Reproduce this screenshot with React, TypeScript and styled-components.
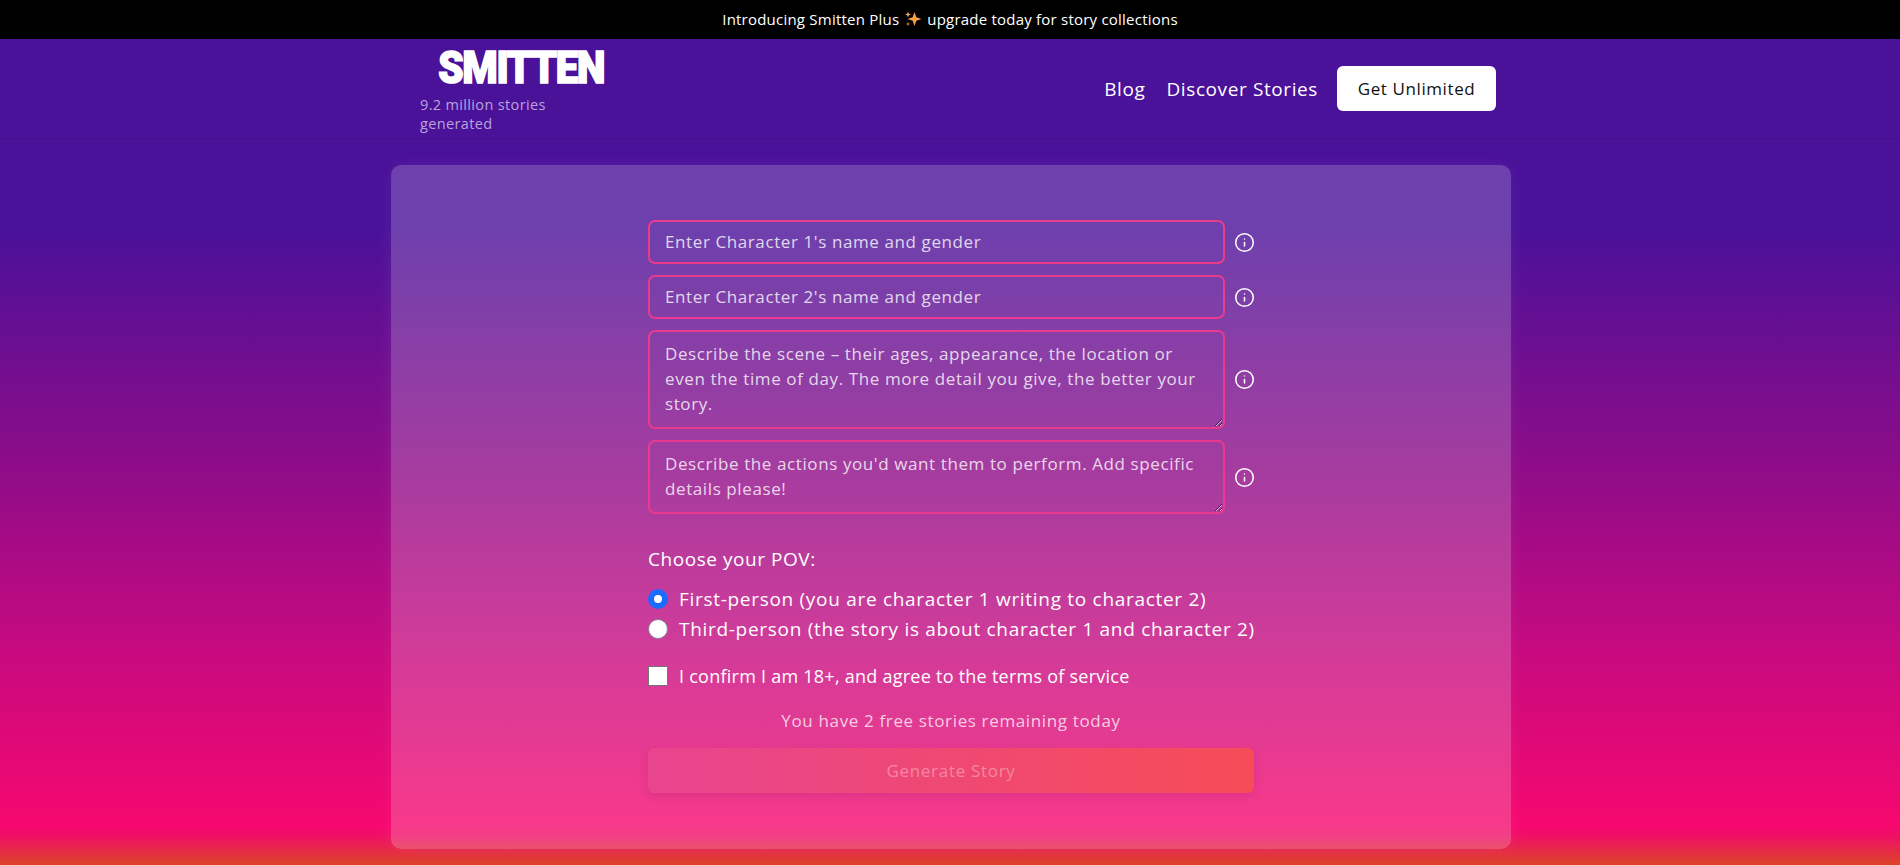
import React from 'react';
import styled, { createGlobalStyle } from 'styled-components';
import { Info } from 'lucide-react';

const FONT = `"Open Sans", "Noto Sans", sans-serif`;

const Global = createGlobalStyle`
    html, body {
        margin: 0;
        padding: 0;
        height: 865px;
        overflow: hidden;
        background: #4a1199;
    }
    * {
        box-sizing: border-box;
    }
`;

const Page = styled.div`
    height: 865px;
    overflow: hidden;
    font-family: ${FONT};
    color: #fff;
    background: linear-gradient(180deg, #4a1199 0, #4a1199 230px, #8f0c88 470px, #c40a80 640px, #f6086f 825px, #f00e68 835px, #dd4428 865px);
`;
const Banner = styled.div`
    height: 39px;
    padding-bottom: 2px;
    background: #000;
    display: flex;
    align-items: center;
    justify-content: center;
    gap: 5px;
    font-size: 15px;
    letter-spacing: 0.22px;
`;
const Header = styled.header`
    height: 99px;
    width: 1120px;
    margin: 0 0 0 391px;
    padding: 0 15px 0 16px;
    display: flex;
    align-items: center;
    justify-content: space-between;
`;
const HeaderRule = styled.div`
    height: 1px;
    background: rgba(60, 10, 110, 0.2);
`;
const Brand = styled.div`
    display: flex;
    flex-direction: column;
    align-items: center;
    width: 202px;
    margin-left: 13px;
    margin-top: 4px;
`;
const Logo = styled.div`
    font-family: Roboto, sans-serif;
    font-weight: 900;
    font-size: 44px;
    line-height: 40px;
    letter-spacing: -1.4px;
    -webkit-text-stroke: 1.6px #fff;
    transform: scaleX(0.92);
`;
const Tagline = styled.div`
    font-size: 14.5px;
    letter-spacing: 0.35px;
    color: #b9a3de;
    margin-top: 7px;
`;
const Nav = styled.nav`
    display: flex;
    align-items: center;
`;
const NavLink = styled.a`
    font-size: 19px;
    letter-spacing: 0.6px;
    margin-right: 21px;
    color: #fff;
    &:last-of-type {
        margin-right: 19px;
    }
`;
const CtaButton = styled.button`
    width: 159px;
    height: 45px;
    background: #fff;
    border: 0;
    border-radius: 6px;
    font-family: ${FONT};
    font-size: 17px;
    letter-spacing: 0.6px;
    color: #111;
`;
const Panel = styled.main`
    width: 1120px;
    height: 684px;
    margin: 26px 0 0 391px;
    padding-top: 55px;
    border-radius: 10px;
    background: rgba(255, 255, 255, 0.2);
    box-shadow: 0 0 16px rgba(255, 255, 255, 0.07);
`;
const Form = styled.form`
    width: 608px;
    margin-left: 257px;
`;
const Fields = styled.div`
    display: flex;
    flex-direction: column;
    gap: 11px;
`;
const FieldRow = styled.div`
    display: flex;
    align-items: center;
    gap: 9px;
`;
const fieldStyles = `
    width: 577px;
    flex: none;
    border: 2px solid #ea3a8e;
    border-radius: 7px;
    background: transparent;
    outline: none;
    padding: 0 15px;
    color: #fff;
    font-family: ${FONT};
    font-size: 17px;
    letter-spacing: 0.6px;
    line-height: 25px;
    &::placeholder {
        color: rgba(255, 255, 255, 0.8);
        opacity: 1;
    }
`;
const TextInput = styled.input`
    ${fieldStyles}
    height: 44px;
    padding-bottom: 2px;
`;
const TextArea = styled.textarea<{ $h: number }>`
    ${fieldStyles}
    height: ${p => p.$h}px;
    padding-top: 9px;
    display: block;
    resize: vertical;
`;
const HelpIcon = styled(Info)`
    flex: none;
    color: #fff;
`;
const PovLabel = styled.div`
    margin-top: 34px;
    font-size: 19px;
    letter-spacing: 0.55px;
    line-height: 22px;
`;
const Options = styled.div`
    margin-top: 17px;
    display: flex;
    flex-direction: column;
    gap: 7px;
`;
const OptionLabel = styled.label`
    display: flex;
    align-items: center;
    gap: 11px;
    height: 23px;
    font-size: 19px;
    letter-spacing: 0.7px;
    white-space: nowrap;
`;
const Radio = styled.input.attrs({ type: 'radio', name: 'pov' })`
    appearance: none;
    width: 20px;
    height: 20px;
    margin: 0;
    flex: none;
    border-radius: 50%;
    background: #fff;
    border: 1px solid #8a7f90;
    &:checked {
        border: 6px solid #1b6bff;
    }
`;
const Check = styled.input.attrs({ type: 'checkbox' })`
    appearance: none;
    width: 20px;
    height: 20px;
    margin: 0;
    flex: none;
    background: #fff;
    border: 1px solid #767676;
`;
const ConfirmLabel = styled(OptionLabel)`
    margin-top: 24px;
    font-size: 18px;
    letter-spacing: 0.25px;
`;
const Remaining = styled.div`
    width: 606px;
    margin-top: 22px;
    text-align: center;
    font-size: 17px;
    letter-spacing: 0.64px;
    line-height: 23px;
    color: rgba(255, 255, 255, 0.75);
`;
const GenerateButton = styled.button`
    display: block;
    width: 606px;
    height: 45px;
    margin-top: 16px;
    border: 0;
    border-radius: 6px;
    background: linear-gradient(90deg, #e8458f, #f74c57);
    box-shadow: 0 4px 10px rgba(120, 20, 90, 0.15);
    font-family: ${FONT};
    font-size: 17px;
    letter-spacing: 0.7px;
    color: rgba(255, 255, 255, 0.35);
`;

const Sparkles = () => (
    <svg width="18" height="18" viewBox="0 0 18 18">
        <path d="M10.5 2 L12.3 7.2 L17.5 9 L12.3 10.8 L10.5 16 L8.7 10.8 L3.5 9 L8.7 7.2 Z" fill="#f9a24a" />
        <path d="M4 1.5 L4.8 3.7 L7 4.5 L4.8 5.3 L4 7.5 L3.2 5.3 L1 4.5 L3.2 3.7 Z" fill="#f7b04f" />
        <path d="M4 12 L4.6 13.4 L6 14 L4.6 14.6 L4 16 L3.4 14.6 L2 14 L3.4 13.4 Z" fill="#f08a3c" />
    </svg>
);

const Field: React.FC<{ children: React.ReactNode }> = ({ children }) => (
    <FieldRow>
        {children}
        <HelpIcon size={21} strokeWidth={1.75} />
    </FieldRow>
);

const App: React.FC = () => {
    return (
        <Page>
            <Global />
            <Banner>
                Introducing Smitten Plus <Sparkles /> upgrade today for story collections
            </Banner>
            <Header>
                <Brand>
                    <Logo>SMITTEN</Logo>
                    <Tagline>9.2 million stories generated</Tagline>
                </Brand>
                <Nav>
                    <NavLink>Blog</NavLink>
                    <NavLink>Discover Stories</NavLink>
                    <CtaButton type="button">Get Unlimited</CtaButton>
                </Nav>
            </Header>
            <HeaderRule />
            <Panel>
                <Form>
                    <Fields>
                        <Field><TextInput placeholder="Enter Character 1's name and gender" /></Field>
                        <Field><TextInput placeholder="Enter Character 2's name and gender" /></Field>
                        <Field>
                            <TextArea $h={99} placeholder="Describe the scene – their ages, appearance, the location or even the time of day. The more detail you give, the better your story." />
                        </Field>
                        <Field>
                            <TextArea $h={74} placeholder="Describe the actions you'd want them to perform. Add specific details please!" />
                        </Field>
                    </Fields>
                    <PovLabel>Choose your POV:</PovLabel>
                    <Options>
                        <OptionLabel><Radio defaultChecked />First-person (you are character 1 writing to character 2)</OptionLabel>
                        <OptionLabel><Radio />Third-person (the story is about character 1 and character 2)</OptionLabel>
                    </Options>
                    <ConfirmLabel><Check />I confirm I am 18+, and agree to the terms of service</ConfirmLabel>
                    <Remaining>You have 2 free stories remaining today</Remaining>
                    <GenerateButton type="button">Generate Story</GenerateButton>
                </Form>
            </Panel>
        </Page>
    );
};

export default App;
